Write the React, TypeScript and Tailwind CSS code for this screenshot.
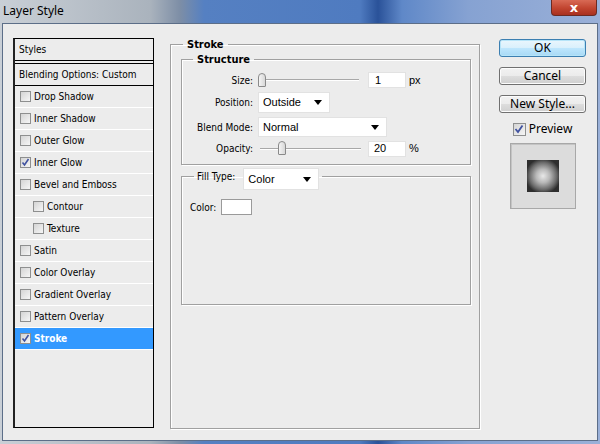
import React from "react";

const tah = "font-['DejaVu_Sans_Condensed','Liberation_Sans',sans-serif]";
const seg = "font-['Noto_Sans','Open_Sans',sans-serif]";
const ctl = "font-['Liberation_Sans',Arial,sans-serif]";

function Check({ checked }: { checked?: boolean }) {
  return (
    <span className="w-[11px] h-[11px] shrink-0 border border-[#8e8f8f] bg-[linear-gradient(135deg,#d4d4d4,#f6f6f6)] flex items-center justify-center">
      {checked && (
        <svg width="9" height="9" viewBox="0 0 9 9">
          <path d="M1.5 4.5 L3.5 7 L7.5 1" fill="none" stroke="#4052a0" strokeWidth="1.6" />
        </svg>
      )}
    </span>
  );
}

function Arrow() {
  return (
    <svg width="8" height="5" viewBox="0 0 8 5">
      <path d="M0 0 H8 L4 5 Z" fill="#000" />
    </svg>
  );
}

function Dropdown({ value, w, h }: { value: string; w: string; h: string }) {
  return (
    <div className={`${w} ${h} bg-white border border-[#e2e2e2] flex items-center justify-between pl-[4px] pr-[7px] text-[11px] ${ctl}`}>
      <span>{value}</span>
      <Arrow />
    </div>
  );
}

function Slider({ pos }: { pos: number }) {
  return (
    <div className="relative w-[101px] h-[15px] flex items-center">
      <div className="w-full h-[2px] border-t border-[#a8a8a8] border-b border-b-white" />
      <div
        className="absolute top-0 w-[8px] h-[14px] rounded-t-[4px] rounded-b-[1px] border border-[#8a8a8a] bg-[linear-gradient(90deg,#f4f4f4,#d8d8d8)]"
        style={{ left: pos }}
      />
    </div>
  );
}

const rows: { label: string; checked?: boolean; indent?: boolean; selected?: boolean }[] = [
  { label: "Drop Shadow" },
  { label: "Inner Shadow" },
  { label: "Outer Glow" },
  { label: "Inner Glow", checked: true },
  { label: "Bevel and Emboss" },
  { label: "Contour", indent: true },
  { label: "Texture", indent: true },
  { label: "Satin" },
  { label: "Color Overlay" },
  { label: "Gradient Overlay" },
  { label: "Pattern Overlay" },
  { label: "Stroke", checked: true, selected: true },
];

export default function App() {
  return (
    <div className="w-[600px] h-[444px] overflow-hidden flex flex-col bg-[linear-gradient(90deg,#c9cfd6_0%,#aab3bd_25%,#7d8ea6_30%,#5580c2_34%,#4f7bc0_60%,#2a5299_63%,#5f88c8_67%,#86a2d2_78%,#9ab0d8_100%)]">
      {/* title bar */}
      <div className="h-[23px] flex items-start justify-between shrink-0">
        <span className={`ml-[3px] mt-[3px] text-[12px] leading-[15px] text-black ${seg}`}>Layer Style</span>
        <div className="mr-[3px] w-[46px] h-[16px] rounded-b-[4px] border border-t-0 border-[#6b2a22] bg-[linear-gradient(180deg,#d86a55,#c1442f_55%,#a8301f)] flex items-center justify-center">
          <span className="text-white text-[13px] font-bold leading-none font-['DejaVu_Sans',sans-serif]">x</span>
        </div>
      </div>
      {/* body */}
      <div className="mx-[2px] h-[418px] border border-[#5c6e88] bg-[#ececec] flex items-start pt-[14px] text-[10px] text-black">
        {/* left panel */}
        <div className={`ml-[10px] w-[141px] h-[390px] border border-black border-l-2 border-l-[#222] flex flex-col ${tah}`}>
          <div className="h-[22px] shrink-0 flex items-center pl-[4px] border-b border-black">Styles</div>
          <div className="h-[3px] shrink-0 border-b border-black" />
          <div className="h-[22px] shrink-0 flex items-center pl-[4px] border-b border-black">Blending Options: Custom</div>
          {rows.map((r) => (
            <div
              key={r.label}
              className={`h-[22px] shrink-0 flex items-center gap-[3px] border-b border-white ${r.indent ? "pl-[18px]" : "pl-[5px]"} ${r.selected ? "bg-[#3399ff] text-white font-bold" : ""}`}
            >
              <Check checked={r.checked} />
              <span>{r.label}</span>
            </div>
          ))}
        </div>

        {/* middle */}
        <fieldset className={`ml-[16px] w-[310px] h-[391px] border border-[#a0a0a0] shadow-[inset_1px_1px_0_#fff,1px_1px_0_#fff] ${tah}`}>
          <legend className="ml-[12px] px-[4px] font-bold text-[11px] leading-[13px]">Stroke</legend>
          <fieldset className="ml-[10px] w-[290px] border border-[#a0a0a0] shadow-[inset_1px_1px_0_#fff,1px_1px_0_#fff] pb-[8px] mt-[2px]">
            <legend className="ml-[11px] px-[4px] font-bold text-[11px] leading-[13px]">Structure</legend>
            <div className="flex flex-col gap-[4px] pt-[6px]">
              <div className="h-[16px] flex items-center">
                <span className="w-[71px] text-right">Size:</span>
                <div className="ml-[5px]"><Slider pos={0} /></div>
                <div className={`ml-[9px] w-[38px] h-[16px] bg-white border border-[#e2e2e2] flex items-center pl-[6px] text-[11px] ${ctl}`}>1</div>
                <span className={`ml-[3px] text-[11px] ${ctl}`}>px</span>
              </div>
              <div className="h-[21px] flex items-center">
                <span className="w-[71px] text-right">Position:</span>
                <div className="ml-[5px]"><Dropdown value="Outside" w="w-[72px]" h="h-[21px]" /></div>
              </div>
              <div className="h-[20px] flex items-center">
                <span className="w-[71px] text-right">Blend Mode:</span>
                <div className="ml-[5px]"><Dropdown value="Normal" w="w-[129px]" h="h-[20px]" /></div>
              </div>
              <div className="h-[15px] flex items-center">
                <span className="w-[71px] text-right">Opacity:</span>
                <div className="ml-[7px]"><Slider pos={18} /></div>
                <div className={`ml-[7px] w-[38px] h-[16px] bg-white border border-[#e2e2e2] flex items-center pl-[5px] text-[11px] ${ctl}`}>20</div>
                <span className={`ml-[3px] text-[11px] ${ctl}`}>%</span>
              </div>
            </div>
          </fieldset>
          <fieldset className="ml-[10px] mt-[3px] w-[290px] h-[137px] border border-[#a0a0a0] shadow-[inset_1px_1px_0_#fff,1px_1px_0_#fff]">
            <legend className="ml-[12px] px-[3px] flex items-center">
              <span>Fill Type:</span>
              <div className="ml-[8px] -mb-[6px]"><Dropdown value="Color" w="w-[76px]" h="h-[22px]" /></div>
            </legend>
            <div className="pl-[8px] pt-[15px] flex items-center">
              <span>Color:</span>
              <div className="ml-[5px] w-[31px] h-[16px] bg-white border border-[#9a9a9a]" />
            </div>
          </fieldset>
        </fieldset>

        {/* right */}
        <div className={`ml-[19px] mt-[1px] w-[87px] flex flex-col items-center ${seg} text-[12px]`}>
          <button className="w-[87px] h-[18px] rounded-[3px] border border-[#3c7fb1] shadow-[inset_0_0_0_1px_#b6e4f8] bg-[linear-gradient(180deg,#eaf6fd,#d9f0fc_50%,#bee6fd_51%,#a7d9f5)] leading-none">OK</button>
          <button className="mt-[10px] w-[87px] h-[18px] rounded-[3px] border border-[#707070] shadow-[inset_0_0_0_1px_#fcfcfc] bg-[linear-gradient(180deg,#f2f2f2,#ebebeb_50%,#dddddd_51%,#cfcfcf)] leading-none">Cancel</button>
          <button className="mt-[10px] w-[87px] h-[18px] rounded-[3px] border border-[#707070] shadow-[inset_0_0_0_1px_#fcfcfc] bg-[linear-gradient(180deg,#f2f2f2,#ebebeb_50%,#dddddd_51%,#cfcfcf)] leading-none">New Style...</button>
          <div className="mt-[8px] flex items-center gap-[3px] h-[16px]">
            <span className="w-[13px] h-[13px] border border-[#8e8f8f] bg-[linear-gradient(135deg,#d4d4d4,#f6f6f6)] flex items-center justify-center">
              <svg width="10" height="10" viewBox="0 0 10 10">
                <path d="M1.5 5 L4 8 L8.5 1.5" fill="none" stroke="#4052a0" strokeWidth="1.8" />
              </svg>
            </span>
            <span>Preview</span>
          </div>
          <div className="mt-[6px] w-[66px] h-[66px] bg-[#dcdcdc] border border-[#a8a8a8] shadow-[inset_1px_1px_0_#c4c4c4] flex items-center justify-center">
            <div className="w-[32px] h-[32px] bg-[radial-gradient(circle_at_50%_50%,#e8e8e8_0%,#b8b8b8_30%,#6a6a6a_60%,#2e2e2e_78%)]" />
          </div>
        </div>
      </div>
    </div>
  );
}
